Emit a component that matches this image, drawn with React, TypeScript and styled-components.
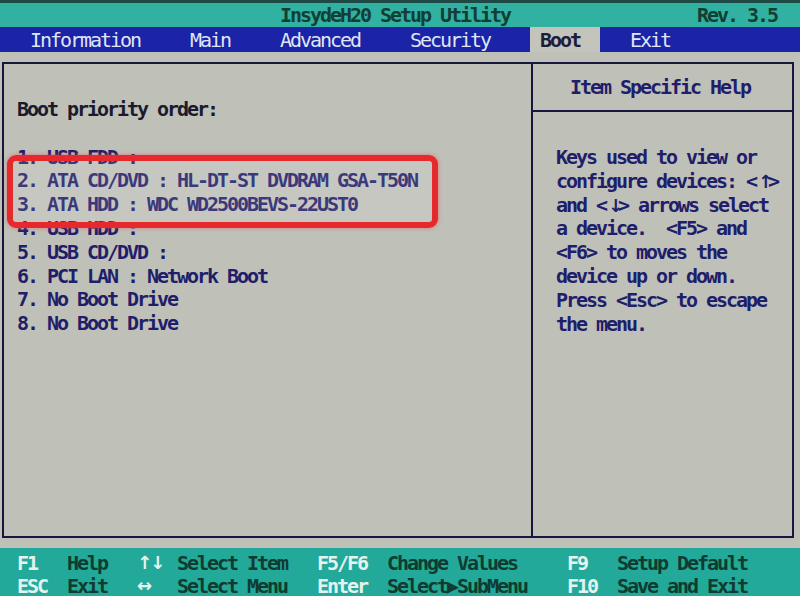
import type { ReactNode } from "react"
import styled, { createGlobalStyle } from "styled-components"

const GlobalStyle = createGlobalStyle`
  html, body {
    margin: 0;
    padding: 0;
    background: #bfc0b8;
  }
`

const font = `"DejaVu Sans Mono", "Liberation Mono", monospace`

const tabs = ["Information", "Main", "Advanced", "Security", "Boot", "Exit"]

const bootOrder = [
  "USB FDD :",
  "ATA CD/DVD : HL-DT-ST DVDRAM GSA-T50N",
  "ATA HDD : WDC WD2500BEVS-22UST0",
  "USB HDD :",
  "USB CD/DVD :",
  "PCI LAN : Network Boot",
  "No Boot Drive",
  "No Boot Drive",
]

const Arrow = styled.span`
  display: inline-block;
  width: 9px;
  margin: 0 1px 0 2px;
  text-align: center;
  font-family: "DejaVu Sans", sans-serif;
  font-size: 18px;
  letter-spacing: 0;
`

const helpLines: ReactNode[] = [
  "Keys used to view or",
  <>
    configure devices: &lt;<Arrow>↑</Arrow>&gt;
  </>,
  <>
    and &lt;<Arrow>↓</Arrow>&gt; arrows select
  </>,
  "a device.  <F5> and",
  "<F6> to moves the",
  "device up or down.",
  "Press <Esc> to escape",
  "the menu.",
]

const footer = [
  ["F1", "Help", "↑↓", "Select Item", "F5/F6", "Change Values", "F9", "Setup Default"],
  ["ESC", "Exit", "↔", "Select Menu", "Enter", "Select▶SubMenu", "F10", "Save and Exit"],
]

const App = () => {
  return (
    <Screen>
      <GlobalStyle />
      <TitleBar>
        <Title>InsydeH20 Setup Utility</Title>
        <Rev>Rev. 3.5</Rev>
      </TitleBar>
      <MenuBar>
        {tabs.map((tab) => (
          <Tab key={tab} $active={tab === "Boot"}>
            {tab}
          </Tab>
        ))}
      </MenuBar>
      <Body>
        <Frame>
          <LeftPanel>
            <Heading>Boot priority order:</Heading>
            <Spacer />
            {bootOrder.map((item, i) => (
              <Entry key={i}>
                <Num>{i + 1}.</Num>
                <span>{item}</span>
              </Entry>
            ))}
            <Highlight />
          </LeftPanel>
          <RightPanel>
            <HelpHeader>Item Specific Help</HelpHeader>
            <HelpBody>
              {helpLines.map((line, i) => (
                <HelpLine key={i}>{line}</HelpLine>
              ))}
            </HelpBody>
          </RightPanel>
        </Frame>
      </Body>
      <Footer>
        {footer.map((row, r) =>
          row.map((cell, c) => (
            <FooterCell key={`${r}-${c}`} $key={c % 2 === 0} $arrow={c === 2}>
              {cell}
            </FooterCell>
          )),
        )}
      </Footer>
    </Screen>
  )
}

const Screen = styled.div`
  width: 800px;
  height: 596px;
  display: flex;
  flex-direction: column;
  background: #bfc0b8;
  font-family: ${font};
  font-size: 20px;
  letter-spacing: -2.04px;
  overflow: hidden;
`

const TitleBar = styled.div`
  height: 24px;
  border-top: 3px solid #1d4a44;
  display: flex;
  align-items: center;
  padding: 0 23px 0 280px;
  background: #30b1a1;
  color: #123e34;
  font-weight: bold;
`

const Title = styled.span``

const Rev = styled.span`
  margin-left: auto;
`

const MenuBar = styled.div`
  height: 25px;
  display: flex;
  align-items: stretch;
  gap: 20px;
  padding-left: 20px;
  background: #1b23a6;
`

const Tab = styled.div<{ $active?: boolean }>`
  display: flex;
  align-items: center;
  padding: 0 20px 0 10px;
  color: ${(p) => (p.$active ? "#1d1d3c" : "#dfe6f6")};
  background: ${(p) => (p.$active ? "#c3c4bc" : "transparent")};
  font-weight: ${(p) => (p.$active ? "bold" : "normal")};
`

const Body = styled.div`
  flex: 1;
  display: flex;
  padding: 10px 6px 10px 2px;
`

const Frame = styled.div`
  flex: 1;
  display: grid;
  grid-template-columns: 527px 1fr;
  border: 2px solid #17173e;
`

const LeftPanel = styled.div`
  position: relative;
  padding: 34px 13px;
  color: #1e1e6a;
  font-weight: bold;
  line-height: 23.8px;
`

const Heading = styled.div`
  color: #1a1a2c;
`

const Spacer = styled.div`
  height: 23.8px;
`

const Entry = styled.div`
  display: flex;
  white-space: pre;
`

const Num = styled.span`
  width: 30px;
`

const Highlight = styled.div`
  position: absolute;
  left: 3px;
  top: 91px;
  width: 419px;
  height: 61px;
  border: 6px solid #e5292c;
  border-radius: 9px;
  background: rgba(255, 255, 255, 0.12);
  box-shadow: 0 0 4px rgba(240, 70, 70, 0.6);
`

const RightPanel = styled.div`
  display: flex;
  flex-direction: column;
  border-left: 2px solid #17173e;
  color: #1e1e6a;
  font-weight: bold;
`

const HelpHeader = styled.div`
  height: 46px;
  display: flex;
  align-items: center;
  padding-left: 37px;
  border-bottom: 2px solid #17173e;
`

const HelpBody = styled.div`
  padding: 34px 0 0 23px;
  line-height: 23.8px;
`

const HelpLine = styled.div`
  white-space: pre;
`

const Footer = styled.div`
  height: 48px;
  box-sizing: border-box;
  padding: 3px 0 0 17px;
  display: grid;
  grid-template-columns: 50px 70px 40px 140px 70px 180px 50px 1fr;
  grid-auto-rows: 23px;
  align-items: center;
  background: #22a999;
`

const FooterCell = styled.div<{ $key?: boolean; $arrow?: boolean }>`
  white-space: pre;
  color: ${(p) => (p.$key ? "#e6f2ee" : "#0f3b31")};
  font-weight: bold;
  ${(p) =>
    p.$arrow &&
    `
    font-family: "DejaVu Sans", sans-serif;
    font-size: 18px;
    letter-spacing: -2px;
  `}
`

export default App
